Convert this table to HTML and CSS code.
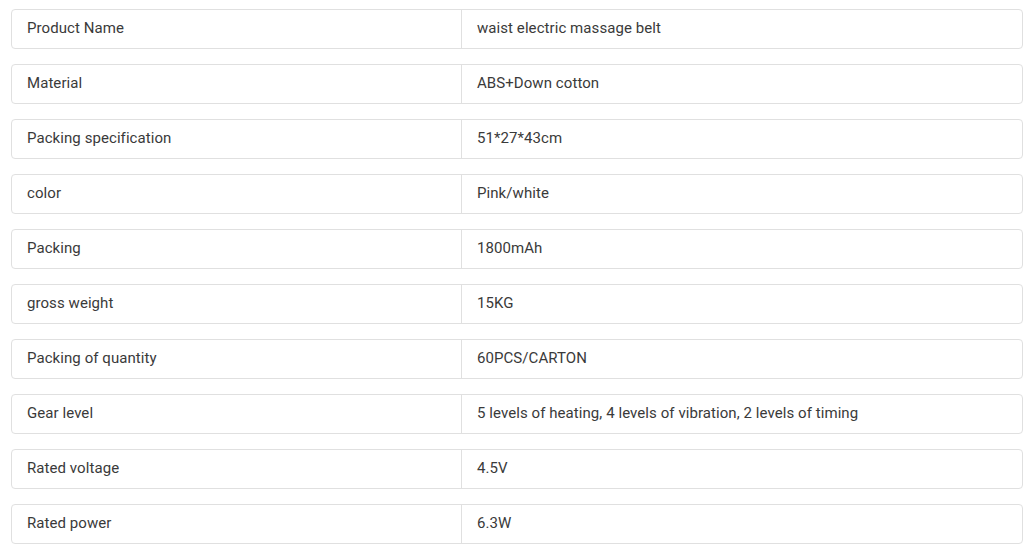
FILE: index.html
```html
<!DOCTYPE html>
<html lang="en">
<head>
    <meta charset="UTF-8">
    <meta name="viewport" content="width=device-width, initial-scale=1.0">
    <title>Product Specifications</title>
    <link rel="stylesheet" href="styles.css">
</head>
<body>
    <div class="spec-list">
        <div class="spec-row"><div class="spec-name">Product Name</div><div class="spec-value">waist electric massage belt</div></div>
        <div class="spec-row"><div class="spec-name">Material</div><div class="spec-value">ABS+Down cotton</div></div>
        <div class="spec-row"><div class="spec-name">Packing specification</div><div class="spec-value">51*27*43cm</div></div>
        <div class="spec-row"><div class="spec-name">color</div><div class="spec-value">Pink/white</div></div>
        <div class="spec-row"><div class="spec-name">Packing</div><div class="spec-value">1800mAh</div></div>
        <div class="spec-row"><div class="spec-name">gross weight</div><div class="spec-value">15KG</div></div>
        <div class="spec-row"><div class="spec-name">Packing of quantity</div><div class="spec-value">60PCS/CARTON</div></div>
        <div class="spec-row"><div class="spec-name">Gear level</div><div class="spec-value">5 levels of heating, 4 levels of vibration, 2 levels of timing</div></div>
        <div class="spec-row"><div class="spec-name">Rated voltage</div><div class="spec-value">4.5V</div></div>
        <div class="spec-row"><div class="spec-name">Rated power</div><div class="spec-value">6.3W</div></div>
    </div>
</body>
</html>
```

FILE: styles.css
```css
body {
    margin: 0;
    padding: 9px 11px;
    background-color: #fff;
    font-family: Roboto, "Liberation Sans", sans-serif;
    font-size: 15px;
    letter-spacing: 0.07px;
    color: #3a3a3a;
}
.spec-list {
    display: flex;
    flex-direction: column;
    gap: 15px;
}
.spec-row {
    display: grid;
    grid-template-columns: 449px 1fr;
    height: 40px;
    box-sizing: border-box;
    border: 1px solid #e0e0e0;
    border-radius: 4px;
}
.spec-name, .spec-value {
    display: flex;
    align-items: center;
    padding: 0 15px 2px;
}
.spec-value {
    border-left: 1px solid #e0e0e0;
}
```
